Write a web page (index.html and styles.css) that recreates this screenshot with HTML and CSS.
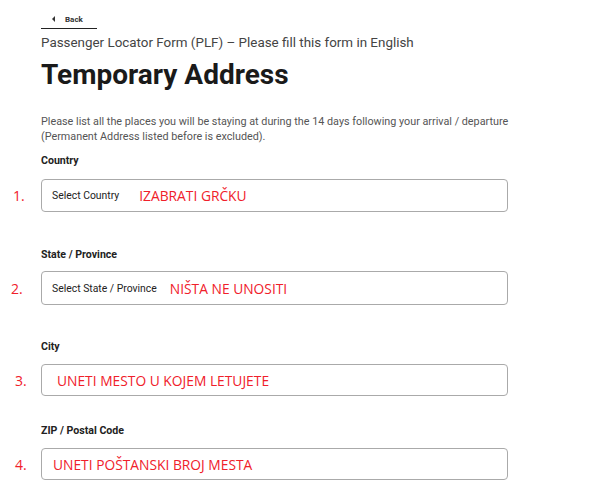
FILE: index.html
```html
<!DOCTYPE html>
<html>
<head>
<meta charset="utf-8">
<link rel="stylesheet" href="styles.css">
</head>
<body>
<div class="page">
  <div class="back-row">
    <a class="back" href="#"><span class="tri"></span>Back</a>
  </div>
  <p class="subtitle">Passenger Locator Form (PLF) – Please fill this form in English</p>
  <h1 class="title">Temporary Address</h1>
  <p class="intro">Please list all the places you will be staying at during the 14 days following your arrival / departure (Permanent Address listed before is excluded).</p>

  <div class="field f1">
    <div class="label">Country</div>
    <div class="row">
      <span class="num n1">1.</span>
      <div class="box b1"><span class="ph">Select Country</span><span class="note note1">IZABRATI GRČKU</span></div>
    </div>
  </div>

  <div class="field f2">
    <div class="label">State / Province</div>
    <div class="row">
      <span class="num n2">2.</span>
      <div class="box b2"><span class="ph">Select State / Province</span><span class="note note2">NIŠTA NE UNOSITI</span></div>
    </div>
  </div>

  <div class="field f3">
    <div class="label">City</div>
    <div class="row">
      <span class="num n3">3.</span>
      <div class="box b3"><span class="note note3">UNETI MESTO U KOJEM LETUJETE</span></div>
    </div>
  </div>

  <div class="field f4">
    <div class="label">ZIP / Postal Code</div>
    <div class="row">
      <span class="num n4">4.</span>
      <div class="box b4"><span class="note note4">UNETI POŠTANSKI BROJ MESTA</span></div>
    </div>
  </div>
</div>
</body>
</html>
```

FILE: styles.css
```css
* { box-sizing: border-box; }
html, body { margin: 0; padding: 0; background: #fff; }
body { font-family: Roboto, "Liberation Sans", sans-serif; color: #222; }
.page { width: 600px; height: 496px; overflow: hidden; padding-top: 12px; }
.back-row { padding-left: 41px; }
.back {
  display: flex; align-items: center;
  width: 56px; height: 17px;
  border-bottom: 1.5px solid #222;
  padding-left: 11px; padding-bottom: 2px;
  font-size: 8px; font-weight: 700; color: #333; text-decoration: none;
}
.tri {
  width: 0; height: 0;
  border-top: 3px solid transparent; border-bottom: 3px solid transparent;
  border-right: 3px solid #333;
  margin-right: 10px;
}
.subtitle { margin: 6px 0 0 41px; font-size: 13.4px; line-height: 16px; color: #444; }
.title { margin: 7px 0 0 41px; font-size: 28px; line-height: 34px; font-weight: 700; color: #1a1a1a; }
.intro { margin: 22px 0 0 41px; width: 500px; font-size: 10.8px; line-height: 15px; color: #555; }
.label { padding-left: 41px; font-size: 10.6px; font-weight: 700; line-height: 12px; color: #222; }
.row { display: flex; align-items: center; }
.num { width: 41px; padding-left: 13px; font-family: "Open Sans", sans-serif; font-size: 14px; color: #f0202a; }
.n2 { padding-left: 11px; }
.n3, .n4 { padding-left: 15px; }
.box {
  width: 467px; height: 33px;
  border: 1px solid #aaa; border-radius: 4px;
  display: flex; align-items: center; padding-left: 10px;
}
.b2 { height: 34px; }
.b3, .b4 { height: 32px; }
.ph { font-size: 10.4px; color: #222; }
.note { font-family: "Open Sans", sans-serif; font-size: 13.8px; color: #f0202a; }
.note1 { margin-left: 20px; }
.note2 { margin-left: 13px; }
.note3 { margin-left: 5px; }
.note4 { margin-left: 1px; }
.f1 { margin-top: 11px; }
.f1 .row { margin-top: 12px; }
.f2 { margin-top: 37px; }
.f2 .row { margin-top: 10px; }
.f3 { margin-top: 36px; }
.f3 .row { margin-top: 11px; }
.f4 { margin-top: 29px; }
.f4 .row { margin-top: 11px; }
```
